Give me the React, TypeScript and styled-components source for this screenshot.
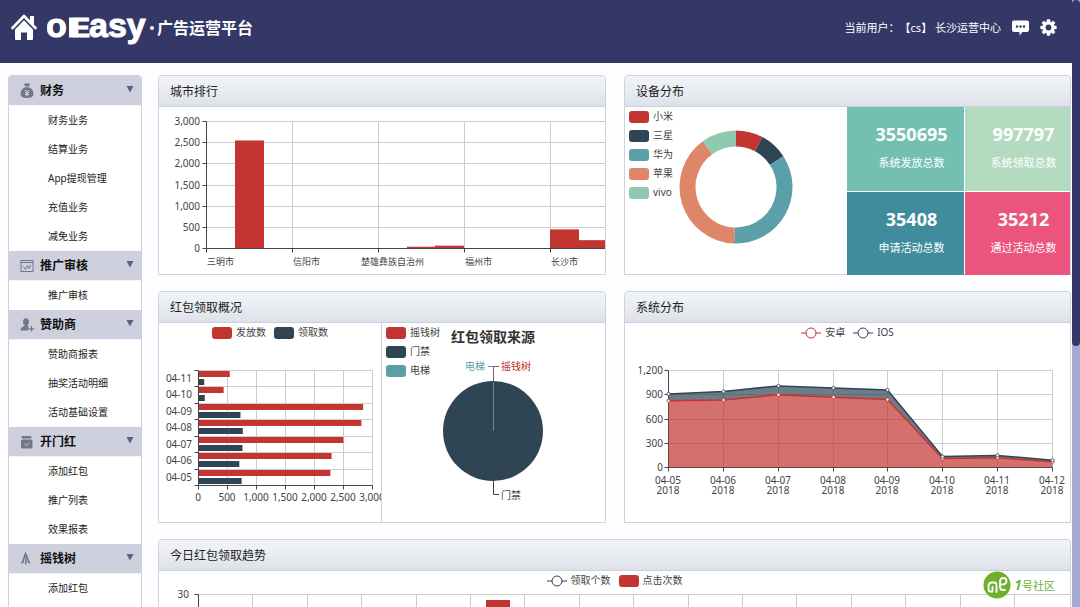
import React from 'react';
import styled, { createGlobalStyle, css } from 'styled-components';

const color = {
  brand: '#343867',
  track: '#a6a9cf',
  red: '#c23531',
  navy: '#2f4554',
  teal: '#5ba0a8',
  orange: '#df8568',
  mint: '#8fc9af',
  axis: '#444',
  grid: '#ccc',
  text: '#444',
};

const GlobalStyle = createGlobalStyle`
  *, *::before, *::after { box-sizing: border-box; }
  body {
    margin: 0;
    background: #fdfdff;
    color: #222;
    font-family: 'Noto Sans', 'Noto Sans CJK SC', sans-serif;
    font-size: 10px;
  }
  button { font: inherit; color: inherit; border: 0; padding: 0; background: none; cursor: pointer; }
  a { color: inherit; text-decoration: none; }
  h1, h2, ul, p, dl, dd { margin: 0; padding: 0; }
  ul { list-style: none; }
  svg { display: block; }
`;

/* ---------- page frame ---------- */

const Shell = styled.div`
  display: flex;
  height: 100vh;
`;

const Page = styled.div`
  flex: 1;
  min-width: 0;
  overflow: hidden;
`;

const ScrollTrack = styled.div`
  flex: none;
  width: 8px;
  background: ${color.track};
`;

const ScrollThumb = styled.div`
  height: 57%;
  border-radius: 4px;
  background: ${color.brand};
`;

const Header = styled.header`
  display: flex;
  align-items: center;
  justify-content: space-between;
  height: 63px;
  padding: 0 15px 8px 11px;
  background: ${color.brand};
  color: #fff;
`;

const Brand = styled.div`
  display: flex;
  align-items: center;
  gap: 10px;
`;

const BrandTitle = styled.h1`
  display: flex;
  align-items: center;
  gap: 3px;
  font-size: 16px;
  line-height: 24px;
  font-weight: 700;
`;

const BrandDot = styled.span`
  width: 4px;
  height: 4px;
  border-radius: 50%;
  background: #fff;
`;

const UserArea = styled.div`
  display: flex;
  align-items: center;
  gap: 11px;
  font-size: 11px;
  line-height: 16px;
  text-spacing-trim: space-all;
`;

const Body = styled.div`
  display: flex;
  gap: 16px;
  padding: 12px 1px 0 8px;
`;

/* ---------- sidebar ---------- */

const Sidebar = styled.nav`
  flex: none;
  width: 134px;
  border: 1px solid #cfcfde;
  border-radius: 4px 4px 0 0;
  background: #fff;
  overflow: hidden;
`;

const GroupButton = styled.button`
  display: flex;
  align-items: center;
  width: 100%;
  height: 30px;
  padding: 0 7px 0 11px;
  border-bottom: 1px solid #f3f3f9;
  background: #cfd0de;
  color: #111;
  font-size: 12px;
  line-height: 18px;
  font-weight: 700;
`;

const GroupIcon = styled.span`
  width: 16px;
  margin-right: 4px;
`;

const GroupName = styled.span`
  flex: 1;
  text-align: left;
`;

const MenuLink = styled.a`
  display: block;
  height: 29px;
  padding-left: 39px;
  font-size: 10px;
  line-height: 28px;
`;

/* ---------- panels ---------- */

const Main = styled.main`
  flex: 1;
  min-width: 0;
  display: grid;
  grid-template-columns: minmax(0, 448fr) minmax(0, 447fr);
  gap: 16px 18px;
`;

const Panel = styled.section<{ $wide?: boolean }>`
  border: 1px solid #cdd3de;
  border-radius: 4px 4px 0 0;
  background: #fff;
  ${(p) => p.$wide && css`grid-column: 1 / -1;`}
`;

const PanelTitle = styled.h2`
  height: 31px;
  padding: 1px 0 0 11px;
  border-bottom: 1px solid #c9cfdc;
  border-radius: 4px 4px 0 0;
  background: linear-gradient(#f2f5f7, #dfe1ea);
  font-size: 12px;
  line-height: 30px;
  font-weight: 400;
`;

const Split = styled.div<{ $columns: string }>`
  display: grid;
  grid-template-columns: ${(p) => p.$columns};
`;

const Pane = styled.div<{ $divided?: boolean }>`
  min-width: 0;
  ${(p) => p.$divided && css`border-right: 1px solid #cdd3de;`}
`;

const LegendRow = styled.ul`
  display: flex;
  justify-content: center;
  gap: 8px;
  height: 21px;
`;

const LegendColumn = styled.ul`
  display: flex;
  flex-direction: column;
  padding-left: 4px;
`;

const LegendButton = styled.button`
  display: flex;
  align-items: center;
  gap: 4px;
  height: 19px;
  color: ${color.text};
  font-size: 10px;
  line-height: 19px;
  white-space: nowrap;
`;

const Swatch = styled.span<{ $fill: string }>`
  width: 20px;
  height: 12px;
  border-radius: 3px;
  background: ${(p) => p.$fill};
`;

const Chart = styled.svg<{ $spill?: boolean }>`
  width: 100%;
  height: auto;
  overflow: ${(p) => (p.$spill ? 'visible' : 'hidden')};
  font-family: 'Noto Sans', 'Noto Sans CJK SC', sans-serif;
  font-size: 10px;
  fill: ${color.text};
`;

/* ---------- stat tiles ---------- */

const Tiles = styled.dl`
  display: grid;
  grid-template-columns: 117fr 105fr;
  grid-template-rows: 1fr 1fr;
  gap: 1px;
  margin-bottom: -1px;
`;

const Tile = styled.div<{ $fill: string }>`
  display: flex;
  flex-direction: column-reverse;
  align-items: center;
  justify-content: center;
  gap: 4px;
  padding: 0 0 3px 12px;
  background: ${(p) => p.$fill};
  color: #fff;
`;

const TileLabel = styled.dt`
  font-size: 11px;
  line-height: 22px;
`;

const TileValue = styled.dd`
  font-size: 18px;
  line-height: 28px;
  font-weight: 700;
`;

const Watermark = styled.div`
  position: absolute;
  right: 25px;
  bottom: 8px;
  display: flex;
  align-items: center;
  gap: 3px;
  color: #6eb02c;
  font-size: 11px;
  line-height: 20px;
`;

const WatermarkDigit = styled.em`
  font-size: 15px;
  font-weight: 600;
`;

/* ---------- icons ---------- */

const HouseIcon = () => (
  <svg width="26" height="28" viewBox="0 1 26 28" fill="#fff" aria-hidden="true">
    <path d="M19 3h4v9l-4-4z" />
    <path d="M1.500 15 13 3l11.500 12" fill="none" stroke="#fff" strokeWidth="2.600" strokeLinejoin="round" strokeLinecap="round" />
    <path d="M4 16.500 13 7.200l9 9.300V26q0 1-1 1h-5v-7.500h-6V27H5q-1 0-1-1z" />
  </svg>
);

const Wordmark = () => (
  <svg
    width="100"
    height="46"
    viewBox="47 5 100 46"
    fill="#fff"
    stroke="#fff"
    fontFamily="'Liberation Sans', sans-serif"
    fontWeight="700"
    role="img"
    aria-label="OEasy"
  >
    <text x="46" y="37" fontSize="34" strokeWidth="1">o</text>
    <rect x="69" y="17.500" width="5" height="20" stroke="none" />
    <text x="72" y="37" fontSize="27" strokeWidth="1">E</text>
    <text x="89" y="37" fontSize="34" strokeWidth="1">asy</text>
  </svg>
);

const ChatIcon = () => (
  <svg width="17" height="16" viewBox="0 0 17 16" aria-hidden="true">
    <path d="M2 .5h13q2 0 2 2v7.500q0 2-2 2h-4.500L7.500 15.500V12H2q-2 0-2-2V2.500q0-2 2-2z" fill="#fff" />
    <g fill={color.brand}>
      <circle cx="5" cy="6.500" r="1.200" />
      <circle cx="8.500" cy="6.500" r="1.200" />
      <circle cx="12" cy="6.500" r="1.200" />
    </g>
  </svg>
);

const GearIcon = () => (
  <svg width="17" height="17" viewBox="-8.500 -8.500 17 17" aria-hidden="true">
    {[0, 45, 90, 135].map((a) => (
      <rect key={a} x="-1.800" y="-8.200" width="3.600" height="16.400" rx="1" fill="#fff" transform={`rotate(${a})`} />
    ))}
    <circle r="6" fill="#fff" />
    <circle r="2.900" fill={color.brand} />
  </svg>
);

const glyph = '#74778b';

const BagIcon = () => (
  <svg width="14" height="16" viewBox="0 0 14 16" aria-hidden="true">
    <path d="M4 1q3-1.500 6 0L9 3.500H5z" fill={glyph} />
    <path d="M5 4.200h4Q13.500 6.500 13.500 11q0 4-6.500 4T.5 11Q.5 6.500 5 4.200z" fill={glyph} />
    <path d="M5 7l2 2.300L9 7M7 9.300V13M5 9.800h4M5 11.500h4" stroke="#d6d7e3" fill="none" />
  </svg>
);

const ChartIcon = () => (
  <svg width="14" height="14" viewBox="0 0 14 14" fill="none" stroke={glyph} aria-hidden="true">
    <rect x="1" y="1.500" width="12" height="11" />
    <path d="M1 3.500h12M3.500 7.500l2 3 2-4 1.500 3 2-3.500" />
  </svg>
);

const PersonIcon = () => (
  <svg width="15" height="14" viewBox="0 0 15 14" aria-hidden="true">
    <ellipse cx="6" cy="3.800" rx="3" ry="3.500" fill={glyph} />
    <path d="M4.500 7h3l1 1.800v3.700H.5Q.3 9.500 4.500 8z" fill={glyph} />
    <path d="M11.500 8v5.500M8.800 10.800h5.500" stroke={glyph} strokeWidth="1.300" />
  </svg>
);

const JarIcon = () => (
  <svg width="14" height="14" viewBox="0 0 14 14" aria-hidden="true">
    <rect x="1.500" y="1" width="10" height="2.600" rx="1" fill={glyph} />
    <rect x="1" y="4.500" width="11.500" height="9" rx="1.500" fill={glyph} />
    <path d="M4.500 9l1.800 1.500L9 8" stroke="#c3c5d3" fill="none" />
  </svg>
);

const TreeIcon = () => (
  <svg width="12" height="15" viewBox="0 0 12 15" aria-hidden="true">
    <path d="M5.500 1 9 9l1.500 4-3-1.500V9L5.500 6 4 9v2.500L.8 13 2.500 9z" fill={glyph} />
    <path d="M5.500 1 7.500 6h-4z" fill={glyph} />
    <path d="M5.800 7v6.500" stroke={glyph} strokeWidth="1.500" />
  </svg>
);

const CaretIcon = () => (
  <svg width="8" height="9" viewBox="0 0 8 9" aria-hidden="true">
    <path d="M.5 0h7L4 6.500z" fill="#5f6278" />
  </svg>
);

const LineMarker = ({ stroke }: { stroke: string }) => (
  <svg width="20" height="12" viewBox="0 0 20 12" fill="#fff" stroke={stroke} aria-hidden="true">
    <path d="M0 6h20" />
    <circle cx="10" cy="6" r="5" />
  </svg>
);

const CommunityMark = () => (
  <svg width="28" height="28" viewBox="0 0 28 28" aria-hidden="true">
    <circle cx="14" cy="14" r="13.500" fill="#6eb02c" />
    <g fill="none" stroke="#fff" strokeWidth="1.800" strokeLinecap="round" strokeLinejoin="round">
      <path d="M9 20.500H7.500Q5.500 20.500 5.500 18V15.500Q5.500 12 8.500 11.500H11Q13.500 11.500 13.500 14V21" />
      <path d="M9.500 16V20.500" />
      <path d="M17 13.500h3q3.500-.5 3.500-3.500T20.500 7Q17 7 17 11v5q0 3 3 3h2" />
    </g>
  </svg>
);

/* ---------- data ---------- */

const menu = [
  { name: '财务', icon: <BagIcon />, items: ['财务业务', '结算业务', 'App提现管理', '充值业务', '减免业务'] },
  { name: '推广审核', icon: <ChartIcon />, items: ['推广审核'] },
  { name: '赞助商', icon: <PersonIcon />, items: ['赞助商报表', '抽奖活动明细', '活动基础设置'] },
  { name: '开门红', icon: <JarIcon />, items: ['添加红包', '推广列表', '效果报表'] },
  { name: '摇钱树', icon: <TreeIcon />, items: ['添加红包'] },
];

const stats = [
  { label: '系统发放总数', value: '3550695', fill: '#73c0b3' },
  { label: '系统领取总数', value: '997797', fill: '#b3dbbf' },
  { label: '申请活动总数', value: '35408', fill: '#3f8d9c' },
  { label: '通过活动总数', value: '35212', fill: '#ea547d' },
];

const devices = [
  { name: '小米', fill: color.red, to: 28 },
  { name: '三星', fill: color.navy, to: 57 },
  { name: '华为', fill: color.teal, to: 182 },
  { name: '苹果', fill: color.orange, to: 324 },
  { name: 'vivo', fill: color.mint, to: 360 },
];

const cityLabels = [
  { name: '三明市', x: 48 },
  { name: '信阳市', x: 134 },
  { name: '楚雄彝族自治州', x: 202 },
  { name: '福州市', x: 306 },
  { name: '长沙市', x: 392 },
];

const cityBars = [
  { slot: 1, value: 2540 },
  { slot: 7, value: 30 },
  { slot: 8, value: 55 },
  { slot: 12, value: 440 },
  { slot: 13, value: 185 },
];

const packets = [
  { day: '04-11', sent: 530, taken: 90 },
  { day: '04-10', sent: 425, taken: 100 },
  { day: '04-09', sent: 2830, taken: 715 },
  { day: '04-08', sent: 2800, taken: 755 },
  { day: '04-07', sent: 2490, taken: 750 },
  { day: '04-06', sent: 2285, taken: 695 },
  { day: '04-05', sent: 2265, taken: 735 },
];

const systems = [
  { day: '04-05', android: 825, total: 910 },
  { day: '04-06', android: 835, total: 940 },
  { day: '04-07', android: 900, total: 1010 },
  { day: '04-08', android: 870, total: 985 },
  { day: '04-09', android: 840, total: 960 },
  { day: '04-10', android: 110, total: 135 },
  { day: '04-11', android: 120, total: 150 },
  { day: '04-12', android: 70, total: 90 },
];

/* ---------- charts ---------- */

const range = (n: number) => Array.from({ length: n }, (_, i) => i);

const CityChart = () => {
  const left = 47;
  const base = 141;
  const y = (v: number) => base - (v / 3000) * 127;
  return (
    <Chart viewBox="0 0 446 167" role="img" aria-label="城市排行">
      <g transform="translate(.5 .5)" stroke={color.grid}>
        {range(6).map((i) => {
          const gy = Math.round(y((i + 1) * 500));
          return <line key={i} x1={left} x2="446" y1={gy} y2={gy} />;
        })}
        {range(4).map((i) => (
          <line key={i} x1={left + 86 * (i + 1)} x2={left + 86 * (i + 1)} y1="14" y2={base} />
        ))}
      </g>
      {cityBars.map((b) => {
        const x0 = Math.round(left + (b.slot * 86) / 3);
        return <rect key={b.slot} x={x0} y={y(b.value)} width="29" height={base - y(b.value)} fill={color.red} />;
      })}
      <g transform="translate(.5 .5)" stroke={color.axis}>
        <path d={`M${left} 14V${base}H446`} fill="none" />
        {range(7).map((i) => {
          const gy = Math.round(y(i * 500));
          return <line key={i} x1={left - 4} x2={left} y1={gy} y2={gy} />;
        })}
        {range(5).map((i) => (
          <line key={i} x1={left + 86 * i} x2={left + 86 * i} y1={base} y2={base + 4} />
        ))}
      </g>
      {range(7).map((i) => (
        <text key={i} x="41" y={Math.round(y(i * 500)) + 4} textAnchor="end">
          {(i * 500).toLocaleString('en-US')}
        </text>
      ))}
      {cityLabels.map((c) => (
        <text key={c.name} x={c.x} y="158" fontSize="9">{c.name}</text>
      ))}
    </Chart>
  );
};

const polar = (r: number, deg: number) => {
  const a = ((deg - 90) * Math.PI) / 180;
  return `${(r * Math.cos(a)).toFixed(2)} ${(r * Math.sin(a)).toFixed(2)}`;
};

const ring = (from: number, to: number) => {
  const big = to - from > 180 ? 1 : 0;
  return `M${polar(56.5, from)}A56.5 56.5 0 ${big} 1 ${polar(56.5, to)}L${polar(40.5, to)}A40.5 40.5 0 ${big} 0 ${polar(40.5, from)}Z`;
};

const DeviceChart = () => (
  <Chart viewBox="0 0 172 167" role="img" aria-label="设备分布">
    <g transform="translate(61 80)">
      {devices.map((d, i) => (
        <path key={d.name} d={ring(i ? devices[i - 1].to : 0, d.to)} fill={d.fill} />
      ))}
    </g>
  </Chart>
);

const PacketChart = () => {
  const left = 39;
  const top = 26;
  const step = 115 / 7;
  const w = (v: number) => (v / 3000) * 174;
  return (
    <Chart viewBox="0 0 222 178" role="img" aria-label="红包领取概况">
      <g transform="translate(.5 .5)" stroke={color.grid}>
        {range(7).map((i) => (
          <line key={i} x1={left} x2={left + 174} y1={Math.round(top + step * i)} y2={Math.round(top + step * i)} />
        ))}
        {range(6).map((i) => (
          <line key={i} x1={left + 29 * (i + 1)} x2={left + 29 * (i + 1)} y1={top} y2={top + 115} />
        ))}
      </g>
      {packets.map((p, i) => (
        <g key={p.day}>
          <rect x={left + 1} y={Math.round(top + step * i) + 1} width={w(p.sent)} height="6" fill={color.red} />
          <rect x={left + 1} y={Math.round(top + step * i) + 9} width={w(p.taken)} height="6" fill={color.navy} />
          <text x="33" y={Math.round(top + step * i) + 12} textAnchor="end">{p.day}</text>
        </g>
      ))}
      <g transform="translate(.5 .5)" stroke={color.axis}>
        <path d={`M${left} ${top}V${top + 115}H${left + 174}`} fill="none" />
        {range(8).map((i) => (
          <line key={i} x1={left - 4} x2={left} y1={Math.round(top + step * i)} y2={Math.round(top + step * i)} />
        ))}
        {range(7).map((i) => (
          <line key={i} x1={left + 29 * i} x2={left + 29 * i} y1={top + 115} y2={top + 119} />
        ))}
      </g>
      {range(7).map((i) => (
        <text key={i} x={left + 29 * i} y="157" textAnchor="middle">
          {(i * 500).toLocaleString('en-US')}
        </text>
      ))}
    </Chart>
  );
};

const SourceChart = () => (
  <Chart viewBox="0 0 163 199" role="img" aria-label="红包领取来源">
    <text x="51" y="19" fontSize="14" fontWeight="700" textAnchor="middle" fill="#333">红包领取来源</text>
    <circle cx="51" cy="108" r="50" fill={color.navy} />
    <g fill="none">
      <path d="M51.500 108V59" stroke="#6d8791" />
      <path d="M51.500 58V43.500H46" stroke={color.teal} />
      <path d="M51.500 58V43.500H57" stroke="#8a5a62" />
      <path d="M51.500 158V171.500H57" stroke={color.navy} />
    </g>
    <text x="43" y="47" textAnchor="end" fill={color.teal}>电梯</text>
    <text x="59" y="47" fill={color.red}>摇钱树</text>
    <text x="59" y="176">门禁</text>
  </Chart>
);

const SystemChart = () => {
  const left = 43;
  const base = 123;
  const x = (i: number) => Math.round(left + i * 54.86);
  const y = (v: number) => base - (v / 1200) * 97;
  const line = (key: 'android' | 'total') => systems.map((s, i) => `${x(i)},${y(s[key]).toFixed(1)}`);
  const android = line('android');
  const total = line('total');
  return (
    <Chart viewBox="0 0 445 178" role="img" aria-label="系统分布">
      <g transform="translate(.5 .5)">
        <g stroke={color.grid}>
          {range(4).map((i) => (
            <line key={i} x1={left} x2={x(7)} y1={Math.round(y((i + 1) * 300))} y2={Math.round(y((i + 1) * 300))} />
          ))}
          {range(7).map((i) => (
            <line key={i} x1={x(i + 1)} x2={x(i + 1)} y1="26" y2={base} />
          ))}
        </g>
        <g stroke={color.axis}>
          <path d={`M${left} 26V${base}H${x(7)}`} fill="none" />
          {range(5).map((i) => (
            <line key={i} x1={left - 4} x2={left} y1={Math.round(y(i * 300))} y2={Math.round(y(i * 300))} />
          ))}
          {range(8).map((i) => (
            <line key={i} x1={x(i)} x2={x(i)} y1={base} y2={base + 4} />
          ))}
        </g>
        <polygon points={[`${left},${base}`, ...android, `${x(7)},${base}`].join(' ')} fill={color.red} fillOpacity=".7" />
        <polygon points={[...android, ...[...total].reverse()].join(' ')} fill={color.navy} fillOpacity=".7" />
        <polyline points={android.join(' ')} fill="none" stroke={color.red} strokeWidth="1.500" />
        <polyline points={total.join(' ')} fill="none" stroke={color.navy} strokeWidth="1.500" />
        {systems.map((s, i) => (
          <g key={s.day} fill="#fff">
            <circle cx={x(i)} cy={y(s.android)} r="1.600" stroke={color.red} strokeWidth=".8" />
            <circle cx={x(i)} cy={y(s.total)} r="1.600" stroke={color.navy} strokeWidth=".8" />
          </g>
        ))}
      </g>
      {range(5).map((i) => (
        <text key={i} x="38" y={Math.round(y(i * 300)) + 4} textAnchor="end">
          {(i * 300).toLocaleString('en-US')}
        </text>
      ))}
      {systems.map((s, i) => (
        <text key={s.day} textAnchor="middle">
          <tspan x={x(i)} y="140">{s.day}</tspan>
          <tspan x={x(i)} y="150">2018</tspan>
        </text>
      ))}
    </Chart>
  );
};

const TrendChart = () => (
  <Chart $spill viewBox="0 0 911 140" role="img" aria-label="今日红包领取趋势">
    <g transform="translate(.5 .5)">
      <g stroke={color.grid}>
        <line x1="39" x2="911" y1="2" y2="2" />
        {range(15).map((i) => (
          <line key={i} x1={Math.round(39 + 54.4 * (i + 1))} x2={Math.round(39 + 54.4 * (i + 1))} y1="2" y2="120" />
        ))}
      </g>
      <path d="M35 2H39V120H911" fill="none" stroke={color.axis} />
    </g>
    <rect x="327" y="8" width="24" height="112" fill={color.red} />
    <text x="30" y="6" textAnchor="end">30</text>
  </Chart>
);

type LegendEntry = { name: string; fill: string; line?: boolean };

const LegendItems = ({ entries }: { entries: LegendEntry[] }) => (
  <>
    {entries.map((e) => (
      <li key={e.name}>
        <LegendButton type="button">
          {e.line ? <LineMarker stroke={e.fill} /> : <Swatch $fill={e.fill} />}
          {e.name}
        </LegendButton>
      </li>
    ))}
  </>
);

/* ---------- page ---------- */

export default function App() {
  return (
    <Shell>
      <GlobalStyle />
      <Page>
        <Header>
          <Brand>
            <HouseIcon />
            <BrandTitle>
              <Wordmark />
              <BrandDot />
              广告运营平台
            </BrandTitle>
          </Brand>
          <UserArea>
            <span>当前用户：【cs】 长沙运营中心</span>
            <button type="button" aria-label="消息"><ChatIcon /></button>
            <button type="button" aria-label="设置"><GearIcon /></button>
          </UserArea>
        </Header>
        <Body>
          <Sidebar>
            {menu.map((group) => (
              <div key={group.name}>
                <GroupButton type="button" aria-expanded="true">
                  <GroupIcon>{group.icon}</GroupIcon>
                  <GroupName>{group.name}</GroupName>
                  <CaretIcon />
                </GroupButton>
                <ul>
                  {group.items.map((item) => (
                    <li key={item}><MenuLink href="#">{item}</MenuLink></li>
                  ))}
                </ul>
              </div>
            ))}
          </Sidebar>
          <Main>
            <Panel>
              <PanelTitle>城市排行</PanelTitle>
              <CityChart />
            </Panel>
            <Panel>
              <PanelTitle>设备分布</PanelTitle>
              <Split $columns="50px minmax(0, 172fr) minmax(0, 223fr)">
                <LegendColumn><LegendItems entries={devices} /></LegendColumn>
                <Pane><DeviceChart /></Pane>
                <Tiles>
                  {stats.map((s) => (
                    <Tile key={s.label} $fill={s.fill}>
                      <TileLabel>{s.label}</TileLabel>
                      <TileValue>{s.value}</TileValue>
                    </Tile>
                  ))}
                </Tiles>
              </Split>
            </Panel>
            <Panel>
              <PanelTitle>红包领取概况</PanelTitle>
              <Split $columns="minmax(0, 223fr) 60px minmax(0, 163fr)">
                <Pane $divided>
                  <LegendRow>
                    <LegendItems entries={[{ name: '发放数', fill: color.red }, { name: '领取数', fill: color.navy }]} />
                  </LegendRow>
                  <PacketChart />
                </Pane>
                <LegendColumn>
                  <LegendItems
                    entries={[
                      { name: '摇钱树', fill: color.red },
                      { name: '门禁', fill: color.navy },
                      { name: '电梯', fill: color.teal },
                    ]}
                  />
                </LegendColumn>
                <Pane><SourceChart /></Pane>
              </Split>
            </Panel>
            <Panel>
              <PanelTitle>系统分布</PanelTitle>
              <LegendRow>
                <LegendItems
                  entries={[
                    { name: '安卓', fill: color.red, line: true },
                    { name: 'IOS', fill: color.navy, line: true },
                  ]}
                />
              </LegendRow>
              <SystemChart />
            </Panel>
            <Panel $wide>
              <PanelTitle>今日红包领取趋势</PanelTitle>
              <LegendRow>
                <LegendItems
                  entries={[
                    { name: '领取个数', fill: color.navy, line: true },
                    { name: '点击次数', fill: color.red },
                  ]}
                />
              </LegendRow>
              <TrendChart />
            </Panel>
          </Main>
        </Body>
        <Watermark>
          <CommunityMark />
          <span><WatermarkDigit>1</WatermarkDigit>号社区</span>
        </Watermark>
      </Page>
      <ScrollTrack><ScrollThumb /></ScrollTrack>
    </Shell>
  );
}
